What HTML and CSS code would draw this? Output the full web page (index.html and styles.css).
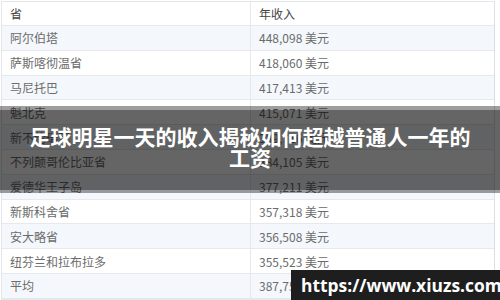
FILE: index.html
```html
<!DOCTYPE html>
<html lang="zh">
<head>
<meta charset="utf-8">
<link rel="stylesheet" href="styles.css">
</head>
<body>
<div class="page">
  <div class="table">
    <div class="row head"><div class="cell">省</div><div class="cell">年收入</div></div>
    <div class="row alt"><div class="cell">阿尔伯塔</div><div class="cell">448,098 美元</div></div>
    <div class="row"><div class="cell">萨斯喀彻温省</div><div class="cell">418,060 美元</div></div>
    <div class="row alt"><div class="cell">马尼托巴</div><div class="cell">417,413 美元</div></div>
    <div class="row"><div class="cell">魁北克</div><div class="cell">415,071 美元</div></div>
    <div class="row alt"><div class="cell">新不伦瑞克</div><div class="cell">389,716 美元</div></div>
    <div class="row"><div class="cell">不列颠哥伦比亚省</div><div class="cell">384,105 美元</div></div>
    <div class="row alt"><div class="cell">爱德华王子岛</div><div class="cell">377,211 美元</div></div>
    <div class="row"><div class="cell">新斯科舍省</div><div class="cell">357,318 美元</div></div>
    <div class="row alt"><div class="cell">安大略省</div><div class="cell">356,508 美元</div></div>
    <div class="row"><div class="cell">纽芬兰和拉布拉多</div><div class="cell">355,523 美元</div></div>
    <div class="row alt"><div class="cell">平均</div><div class="cell">387,756 美元</div></div>
  </div>
  <div class="band">
    <div class="band-inner">
      <h1 class="title">足球明星一天的收入揭秘如何超越普通人一年的<br>工资</h1>
    </div>
  </div>
  <div class="watermark">https://www.xiuzs.com</div>
</div>
</body>
</html>
```

FILE: styles.css
```css
html, body {
  margin: 0;
  padding: 0;
  background: #ffffff;
}
.page {
  position: relative;
  width: 500px;
  height: 300px;
  overflow: hidden;
  padding: 1px 0 0 1px;
  box-sizing: border-box;
}
.table {
  width: 494px;
  border: 1px solid #e3e6ea;
  border-right-color: #dcdfe3;
  box-sizing: border-box;
  font-family: "Noto Sans CJK SC", "Noto Sans", sans-serif;
  font-size: 12px;
  color: #6b6b6b;
}
.row {
  display: grid;
  grid-template-columns: 248px 1fr;
  height: 24.8px;
  box-sizing: border-box;
  border-bottom: 1px solid #e6e8eb;
  background: #ffffff;
}
.row.alt {
  background: #f4f8fc;
}
.row.head {
  color: #454545;
  height: 24px;
}
.cell {
  display: flex;
  align-items: center;
  padding-left: 8px;
  white-space: nowrap;
}
.cell + .cell {
  border-left: 1px solid #e6e8eb;
}
.band {
  position: absolute;
  left: 0;
  top: 106px;
  width: 500px;
  height: 87px;
  background: rgba(0, 0, 0, 0.38);
  display: flex;
  flex-direction: column;
}
.band-inner {
  margin: 4px 0 3px;
  flex: 1;
  background: rgba(0, 0, 0, 0.36);
  display: flex;
  align-items: center;
  justify-content: center;
}
.title {
  margin: 0 0 6px;
  font-family: "Noto Sans CJK SC", sans-serif;
  font-weight: bold;
  font-size: 21px;
  line-height: 21px;
  color: #ffffff;
  text-align: center;
}
.watermark {
  position: absolute;
  left: 291px;
  top: 270px;
  width: 209px;
  height: 30px;
  background: #1e1e1e;
  color: #ffffff;
  font-family: "Open Sans", "Liberation Sans", sans-serif;
  font-weight: bold;
  font-size: 17.4px;
  line-height: 30px;
  padding-left: 10px;
  box-sizing: border-box;
  white-space: nowrap;
  overflow: hidden;
}
```
